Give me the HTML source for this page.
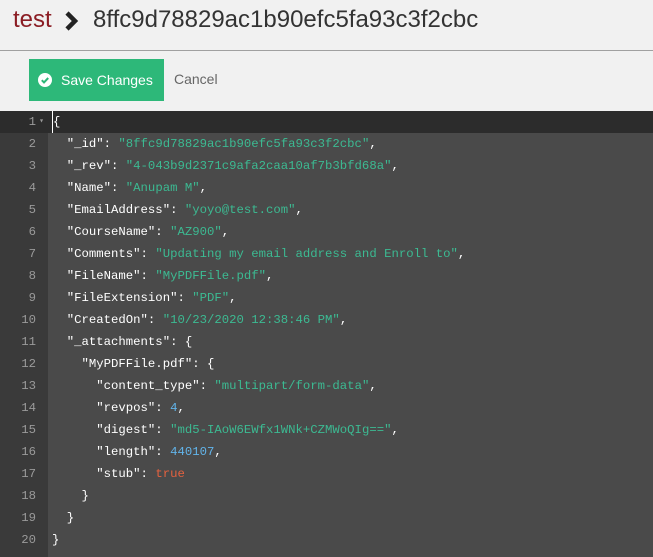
<!DOCTYPE html>
<html><head><style>
body{margin:0;width:653px;height:557px;background:#f1f1f1;font-family:"Liberation Sans",sans-serif;overflow:hidden;position:relative}
.h{position:absolute;top:6px;font-size:24px;color:#333;white-space:nowrap}
.hr{position:absolute;left:0;top:50px;width:653px;height:1px;background:#a0a0a0}
.btn{position:absolute;left:29px;top:59px;width:135px;height:42px;background:#2db879;color:#fff;font-size:14px}
.btn span{position:absolute;left:32px;top:13px}
.cc{position:absolute;left:9px;top:14px;width:14px;height:14px}
.cancel{position:absolute;left:174px;top:71px;font-size:14px;color:#666}
.ed{position:absolute;left:0;top:111px;width:653px;height:446px;background:#4a4a4a;font-family:"Liberation Mono",monospace;font-size:12.3px}
.g{position:absolute;left:0;top:0;width:48px;height:446px;background:#3a3a3a}
.l{position:absolute;left:0;height:22px;line-height:22px;width:653px;white-space:pre;color:#fff}
.l .n{position:absolute;left:0;width:36px;text-align:right;color:#9a9a9a}
.l .c{position:absolute;left:52px}
.s{color:#3cba92}.num{color:#62b4ea}.b{color:#e5613f}
</style></head><body>
<div class="h" style="left:13px;color:#8b1d24">test</div>
<svg style="position:absolute;left:64px;top:10px" width="16" height="22" viewBox="0 0 16 22"><path d="M3 3l8 8-8 8" stroke="#222" stroke-width="4.5" fill="none"/></svg>
<div class="h" style="left:93px">8ffc9d78829ac1b90efc5fa93c3f2cbc</div>
<div class="hr"></div>
<div class="btn"><svg class="cc" viewBox="0 0 14 14"><circle cx="7" cy="7" r="7" fill="#fff"/><path d="M3.8 7.2l2.2 2.2 4.2-4.4" stroke="#2db879" stroke-width="2" fill="none"/></svg><span>Save Changes</span></div>
<div class="cancel">Cancel</div>
<div class="ed"><div class="g"></div>
<div class="l" style="top:0;background:#2c2c2c"><span class="n" style="width:48px"><span style="position:absolute;right:12px">1</span><span style="position:absolute;right:4px;font-size:8px">▾</span></span><span class="c" style="border-left:1px solid #fff">{</span></div>
<div class="l" style="top:22px"><span class="n">2</span><span class="c">  "_id": <span class="s">"8ffc9d78829ac1b90efc5fa93c3f2cbc"</span>,</span></div>
<div class="l" style="top:44px"><span class="n">3</span><span class="c">  "_rev": <span class="s">"4-043b9d2371c9afa2caa10af7b3bfd68a"</span>,</span></div>
<div class="l" style="top:66px"><span class="n">4</span><span class="c">  "Name": <span class="s">"Anupam M"</span>,</span></div>
<div class="l" style="top:88px"><span class="n">5</span><span class="c">  "EmailAddress": <span class="s">"yoyo@test.com"</span>,</span></div>
<div class="l" style="top:110px"><span class="n">6</span><span class="c">  "CourseName": <span class="s">"AZ900"</span>,</span></div>
<div class="l" style="top:132px"><span class="n">7</span><span class="c">  "Comments": <span class="s">"Updating my email address and Enroll to"</span>,</span></div>
<div class="l" style="top:154px"><span class="n">8</span><span class="c">  "FileName": <span class="s">"MyPDFFile.pdf"</span>,</span></div>
<div class="l" style="top:176px"><span class="n">9</span><span class="c">  "FileExtension": <span class="s">"PDF"</span>,</span></div>
<div class="l" style="top:198px"><span class="n">10</span><span class="c">  "CreatedOn": <span class="s">"10/23/2020 12:38:46 PM"</span>,</span></div>
<div class="l" style="top:220px"><span class="n">11</span><span class="c">  "_attachments": {</span></div>
<div class="l" style="top:242px"><span class="n">12</span><span class="c">    "MyPDFFile.pdf": {</span></div>
<div class="l" style="top:264px"><span class="n">13</span><span class="c">      "content_type": <span class="s">"multipart/form-data"</span>,</span></div>
<div class="l" style="top:286px"><span class="n">14</span><span class="c">      "revpos": <span class="num">4</span>,</span></div>
<div class="l" style="top:308px"><span class="n">15</span><span class="c">      "digest": <span class="s">"md5-IAoW6EWfx1WNk+CZMWoQIg=="</span>,</span></div>
<div class="l" style="top:330px"><span class="n">16</span><span class="c">      "length": <span class="num">440107</span>,</span></div>
<div class="l" style="top:352px"><span class="n">17</span><span class="c">      "stub": <span class="b">true</span></span></div>
<div class="l" style="top:374px"><span class="n">18</span><span class="c">    }</span></div>
<div class="l" style="top:396px"><span class="n">19</span><span class="c">  }</span></div>
<div class="l" style="top:418px"><span class="n">20</span><span class="c">}</span></div>
</div>
</body></html>
